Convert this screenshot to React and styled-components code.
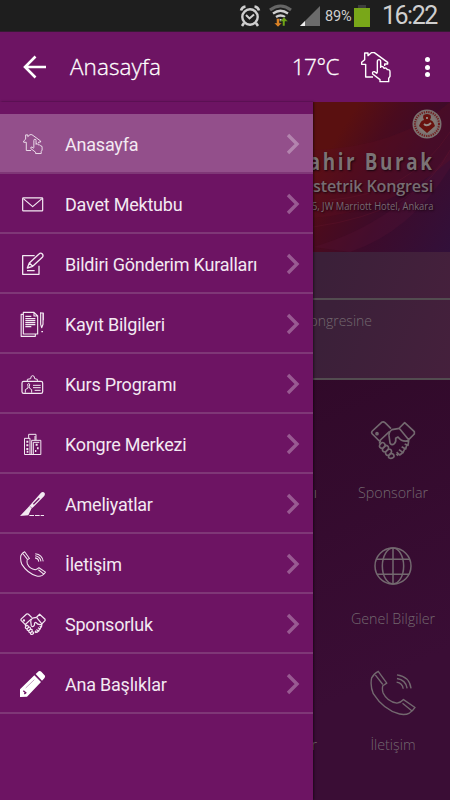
import React from 'react'
import styled, { createGlobalStyle } from 'styled-components';

const GlobalStyle = createGlobalStyle`
    * { box-sizing: border-box; }
    body {
        margin: 0;
        background: #310929;
        font-family: Roboto, "Liberation Sans", sans-serif;
    }
`;
const Screen = styled.div`
    position: relative;
    width: 450px;
    height: 800px;
    overflow: hidden;
    display: flex;
    flex-direction: column;
    background: linear-gradient(155deg, #2d0825 40%, #3a0d35 85%);
`;
const StatusBar = styled.div`
    height: 32px;
    flex: none;
    display: flex;
    align-items: center;
    justify-content: flex-end;
    padding-right: 12px;
    background: #1e1e1e;
    border-bottom: 1px solid #351a32;
    color: #cfcfcf;
`;
const Battery = styled.span`
    font-size: 14.5px;
    letter-spacing: -0.2px;
    margin: 2px 2px 0 4px;
    width: 27px;
    white-space: nowrap;
`;
const Clock = styled.span`
    font-size: 25px;
    line-height: 30px;
    margin-left: 12px;
    width: 56px;
    letter-spacing: -1.5px;
    white-space: nowrap;
`;
const AppBar = styled.div`
    height: 70px;
    flex: none;
    display: flex;
    align-items: center;
    padding: 0 20px 0 23px;
    background: #6d1463;
    color: #fff;
`;
const BarText = styled.div`
    font-family: "Open Sans", "Noto Sans", sans-serif;
    font-weight: 300;
    font-size: 22.5px;
    line-height: 30px;
    white-space: nowrap;
    -webkit-text-stroke: 0.3px #fff;
    letter-spacing: ${({$spacing}) => $spacing || 0};
    margin-left: ${({$left}) => $left || 0};
`;
const BarActions = styled.div`
    margin-left: auto;
    display: flex;
    align-items: center;
`;
const HomeButton = styled.div`
    display: flex;
    margin-left: 21px;
`;
const Dots = styled.div`
    display: flex;
    flex-direction: column;
    gap: 2.5px;
    margin-left: 33px;
    span {
        width: 5px;
        height: 5px;
        border-radius: 50%;
        background: #fff;
    }
`;
const Content = styled.div`
    flex: 1;
    display: flex;
    flex-direction: column;
    min-height: 0;
    color: #675c65;
`;
const Banner = styled.div`
    position: relative;
    height: 150px;
    flex: none;
    overflow: hidden;
    background: linear-gradient(122deg, #5a1010 66%, #4a0b1e 74%, #3c0b2b 84%, #32103a 100%);
`;
const BannerArt = styled.svg`
    position: absolute;
    inset: 0;
`;
const BannerText = styled.div`
    position: relative;
    height: 100%;
    display: flex;
    flex-direction: column;
    align-items: flex-end;
    padding: 45px 17px 0 0;
    white-space: nowrap;
    text-shadow: 1px 1px 2px #1a0410;
`;
const BannerName = styled.div`
    font-family: "Open Sans", sans-serif;
    font-size: 23px;
    line-height: 28px;
    font-weight: 700;
    letter-spacing: 3.2px;
    margin-right: -2px;
    transform: scaleX(0.82);
    transform-origin: right;
    color: #7b7375;
`;
const BannerTitle = styled.div`
    font-family: "Open Sans", sans-serif;
    font-size: 16.2px;
    line-height: 22px;
    font-weight: 600;
    letter-spacing: -0.2px;
    color: #776d72;
`;
const BannerPlace = styled.div`
    font-family: "Open Sans", sans-serif;
    font-size: 10.3px;
    line-height: 18px;
    transform: scaleX(0.91);
    transform-origin: right;
    color: #776a73;
`;
const Panel = styled.div`
    flex: none;
    height: ${({$height}) => $height};
    background: linear-gradient(110deg, #3b2039 70%, #45203c);
    border-bottom: 2px solid #534c50;
    padding: 11px 78px 0 0;
    text-align: right;
    font-family: "Open Sans", sans-serif;
    font-weight: 300;
    font-size: 14px;
    line-height: 20px;
    color: #73686f;
`;
const Tiles = styled.div`
    flex: 1;
    display: grid;
    grid-template-columns: 1fr 114px;
    grid-auto-rows: 126px;
    padding-top: 1px;
`;
const Tile = styled.div`
    height: 126px;
    display: flex;
    flex-direction: column;
    align-items: center;
    justify-content: flex-end;
    padding-bottom: 4px;
    font-family: "Open Sans", sans-serif;
    font-weight: 300;
    font-size: 14.3px;
    line-height: 20px;
    white-space: nowrap;
    color: #73686f;
    svg { margin-bottom: ${({$gap}) => $gap || '24px'}; }
`;
const TileEdge = styled(Tile)`
    align-items: flex-end;
    padding-right: 19px;
`;
const Drawer = styled.nav`
    position: absolute;
    left: 0;
    top: 102px;
    bottom: 0;
    width: 313px;
    padding-top: 12px;
    background: #6d1463;
    box-shadow: 1px 0 2px rgba(0, 0, 0, 0.5);
`;
const Item = styled.div`
    height: 60px;
    display: flex;
    align-items: center;
    padding: 2px 13px 0 20px;
    border-bottom: 2px solid #7f3777;
    background: ${({$active}) => $active ? '#934f8b' : 'transparent'};
    color: #f3e9f2;
    svg { flex: none; }
`;
const Label = styled.div`
    flex: 1;
    margin: 2px 0 0 19px;
    font-size: 18px;
    line-height: 24px;
    letter-spacing: -0.22px;
    white-space: nowrap;
`;

const Icon = ({ size = 26, box = '0 0 78 78', weight = 3.6, children, ...rest }) => (
  <svg width={size} height={size} viewBox={box} fill="none" stroke="currentColor" strokeWidth={weight} strokeLinejoin="round" {...rest}>
    {children}
  </svg>
)

const homePaths = (
  <>
    <path d="M37 78H15V40H3V34L12 26V6H22V14L32 5H41L81 34V39H72V45" />
    <path d="M50 65V32Q50 26 55 26Q60 26 60 32V51M60 47Q67 44 70 52Q77 49 80 56Q88 55 88 63V76L84 82V92H58V86L36 69Q34 61 41 62L50 68" />
  </>
)
const phonePaths = (
  <>
    <path d="M23 2L49 38L37 46Q34 56 38 68Q50 94 80 99Q91 98 100 88L135 112Q129 122 118 129Q105 136 88 132Q40 120 8 70Q-2 46 3 22Q10 8 23 2Z" />
    <path d="M14 13L37 42M97 99L126 123M80 13Q118 18 123 54M80 24Q107 28 111 54M79 35Q97 38 99 55" />
  </>
)
const shakePaths = (
  <>
    <path d="M60 22L42 4Q37 0 32 3L4 29Q0 33 4 38L25 59L56 30M85 20L101 4L130 31V38L113 55L84 20" />
    <circle cx="18" cy="37" r="3" />
    <path d="M85 21L63 25Q53 32 54 43L57 65Q62 74 70 67Q76 61 74 51L81 47Q94 64 113 58L111 72L101 68M107 72L104 83L92 76M101 83L96 94L84 85M94 95L86 101L77 92M81 103L76 97M29 57L25 67" />
    <path d="M29 67Q36 60 41 67Q45 72 38 78L34 82Q23 79 26 71ZM35 82L45 72Q55 74 52 83L43 92Q32 91 35 82ZM44 92L54 83Q64 84 61 94L52 103Q42 101 44 92ZM53 103L60 96Q70 97 69 106Q62 115 53 109Z" />
  </>
)

const PhoneIcon = ({ size, weight }) => <Icon size={size} box="-2 -2 140 140" weight={weight}>{phonePaths}</Icon>
const ShakeIcon = ({ size, weight }) => <Icon size={size} box="-3 -13 138 138" weight={weight}>{shakePaths}</Icon>
const HomeIcon = ({ size, weight }) => <Icon size={size} box="-2 0 96 96" weight={weight}>{homePaths}</Icon>

const icons = {
  home: <Icon box="-14 -12 120 120" weight={4.2}>{homePaths}</Icon>,
  mail: (
    <Icon>
      <rect x="8" y="20.5" width="60" height="39" rx="2" />
      <path d="M10 23L38 47L66 23" />
    </Icon>
  ),
  edit: (
    <Icon weight={4}>
      <path d="M44 14H8V70H57V44M21 59H44" />
      <path d="M22 51L28 36L57 9Q62 4 67 9Q71 14 67 19L38 46ZM28 36L38 46" />
    </Icon>
  ),
  docs: (
    <Icon weight={3.4}>
      <path d="M9 10H3.5V76H46V70M10 4H42L53 15V69H10ZM42 4V15H53M16 16H34M16 23H46M16 29H46M16 35H46M16 41H46M16 47H34" />
      <path d="M60 6H70V28M62 4V40L65 50L69 40V6M64 62H69" strokeWidth="3.5" />
    </Icon>
  ),
  badge: (
    <Icon>
      <rect x="6" y="31" width="62" height="36" rx="5" />
      <path d="M22 30V25L32 23Q32 14 38 14Q44 14 44 23L52 25V30M16 65V56L24 51V46Q21 37 26 37Q31 37 28 46V51L35 56V65M39 43H62M39 50H62M44 58H62" strokeWidth="3" />
    </Icon>
  ),
  building: (
    <Icon weight={3}>
      <path d="M13.5 22H30V70.500H13.500ZM35 70V28H62.500V70.500H30M40 70V34H58M26 22V10H48V27M45 15V28" />
      <path d="M19 32H25M19 43H25M19 54H25M20 62H25M47 41H53M51 52H56M45 60H49" strokeWidth="6" />
    </Icon>
  ),
  scalpel: (
    <Icon>
      <path d="M0 75L22 52L30 43L63 5Q69 0 74 6Q76 12 72 16L41 47L34 53L25 73Z" fill="currentColor" stroke="none" />
      <path d="M40 40L58 22" stroke="#6d1463" strokeWidth="4" />
      <path d="M30 46L36 52" stroke="#6d1463" strokeWidth="1.5" />
      <path d="M28 73.500H72" strokeWidth="3" strokeDasharray="14 3" />
    </Icon>
  ),
  phone: <PhoneIcon size={26} weight={5.5} />,
  shake: <ShakeIcon size={26} weight={6.5} />,
  pencil: (
    <Icon>
      <path d="M0 78V55L43 13L63 33L21 77ZM47 9L56 1Q60 -1 64 2L75 14Q76 18 73 22L66 29Z" fill="#fff" stroke="none" />
      <path d="M17 51L43 26" stroke="#a873a2" strokeWidth="2" />
      <path d="M10 59L19 67M13 66L16 69" stroke="#6d1463" strokeWidth="4" />
    </Icon>
  ),
}

const items = [
  { icon: 'home', text: 'Anasayfa' },
  { icon: 'mail', text: 'Davet Mektubu' },
  { icon: 'edit', text: 'Bildiri Gönderim Kuralları' },
  { icon: 'docs', text: 'Kayıt Bilgileri' },
  { icon: 'badge', text: 'Kurs Programı' },
  { icon: 'building', text: 'Kongre Merkezi' },
  { icon: 'scalpel', text: 'Ameliyatlar' },
  { icon: 'phone', text: 'İletişim' },
  { icon: 'shake', text: 'Sponsorluk' },
  { icon: 'pencil', text: 'Ana Başlıklar' },
]

const Chevron = () => (
  <svg width="14" height="22" viewBox="0 0 14 22" fill="none" stroke="#fff" strokeOpacity="0.3" strokeWidth="3.4">
    <path d="M2 2L11 11L2 20" />
  </svg>
)

const StatusIcons = () => (
  <svg width="82" height="24" viewBox="0 0 82 24" fill="none" stroke="#cfcfcf">
    <circle cx="11" cy="13" r="7.700" strokeWidth="2.400" />
    <path d="M7 11L10.500 14.500L15 10.500" strokeWidth="2" />
    <path d="M2 6.500Q3 3 6.500 2.500M15.500 2.500Q19 3 20 6.500M5 19L3 22M17 19L19 22" strokeWidth="2.600" />
    <path d="M31 6Q41.500 -2 52 6" stroke="#666" strokeWidth="3" />
    <path d="M34 9.500Q41.500 4 49 9.500M37 13Q41.500 10 46 13" strokeWidth="2.300" />
    <path d="M39 15H44L41.500 18Z" fill="#cfcfcf" stroke="none" />
    <path d="M37.500 14.500H40.500V19H43L39 23L35 19H37.500Z" fill="#d98124" stroke="#1e1e1e" strokeWidth="0.500" />
    <path d="M43.500 22V17.500H41L45 13L49 17.500H46V22Z" fill="#6fa518" stroke="#1e1e1e" strokeWidth="0.500" />
    <path d="M61 22L81 2V22Z" fill="#6b6b6b" stroke="none" />
    <path d="M61 22L66 17V22Z" fill="#eee" stroke="none" />
  </svg>
)

const App = () => {
  return (
    <Screen>
      <GlobalStyle />
      <StatusBar>
        <StatusIcons />
        <Battery>89%</Battery>
        <svg width="16" height="22" viewBox="0 0 16 22">
          <path d="M4 0H12V3H4Z" fill="#3d3d3d" />
          <path d="M0 3H16V22H0Z" fill="#79a719" />
        </svg>
        <Clock>16:22</Clock>
      </StatusBar>
      <AppBar>
        <svg width="24" height="24" viewBox="0 0 24 24" fill="none" stroke="#fff" strokeWidth="2.600">
          <path d="M12.500 1.500L2 12L12.500 22.500M2 12H23" />
        </svg>
        <BarText $left="23px" $spacing="0.1px">Anasayfa</BarText>
        <BarActions>
          <BarText $spacing="-0.5px">17°C</BarText>
          <HomeButton><HomeIcon size={32} weight={4.2} /></HomeButton>
          <Dots><span /><span /><span /></Dots>
        </BarActions>
      </AppBar>
      <Content>
        <Banner>
          <BannerArt width="450" height="150" viewBox="0 0 450 150" fill="none">
            <path d="M313 48Q400 45 450 0V58Q390 110 313 116Z" fill="#5b0d22" fillOpacity="0.35" />
            <path d="M313 145Q400 120 450 48V66Q410 130 350 150Z" fill="#5a1436" fillOpacity="0.25" />
            <path d="M330 98Q410 92 450 30M313 125Q420 110 450 48" stroke="#6a1630" strokeOpacity="0.3" />
            <circle cx="427" cy="22" r="14.500" fill="#7b7170" />
            <circle cx="427" cy="22" r="12" stroke="#711f1e" strokeWidth="2" strokeDasharray="1.300 1" />
            <circle cx="427" cy="22" r="9.700" fill="#827874" />
            <path d="M427 31L419 24Q421 18 424 18Q421 12 427 12Q433 12 430 18Q433 18 435 24Z" fill="#68120e" />
            <path d="M424 22Q427 25 431 21M427 15V17" stroke="#988d87" strokeWidth="1.800" />
          </BannerArt>
          <BannerText>
            <BannerName>ahir Burak</BannerName>
            <BannerTitle>stetrik Kongresi</BannerTitle>
            <BannerPlace>15, JW Marriott Hotel, Ankara</BannerPlace>
          </BannerText>
        </Banner>
        <Panel $height="48px" />
        <Panel $height="80px">ongresine</Panel>
        <Tiles>
          <TileEdge>ı</TileEdge>
          <Tile $gap="20px"><ShakeIcon size={46} weight={5} />Sponsorlar</Tile>
          <TileEdge />
          <Tile>
            <Icon size={38} box="0 0 114 114" weight={4.5}>
              <circle cx="57" cy="57" r="54" />
              <ellipse cx="57" cy="57" rx="32" ry="54" />
              <path d="M57 3V111M8 37H106M8 82H106" />
            </Icon>
            Genel Bilgiler
          </Tile>
          <TileEdge>r</TileEdge>
          <Tile $gap="19px"><PhoneIcon size={46} weight={4.2} />İletişim</Tile>
        </Tiles>
      </Content>
      <Drawer>
        {items.map((item, i) => (
          <Item key={item.text} $active={i === 0}>
            {icons[item.icon]}
            <Label>{item.text}</Label>
            <Chevron />
          </Item>
        ))}
      </Drawer>
    </Screen>
  )
}

export default App
